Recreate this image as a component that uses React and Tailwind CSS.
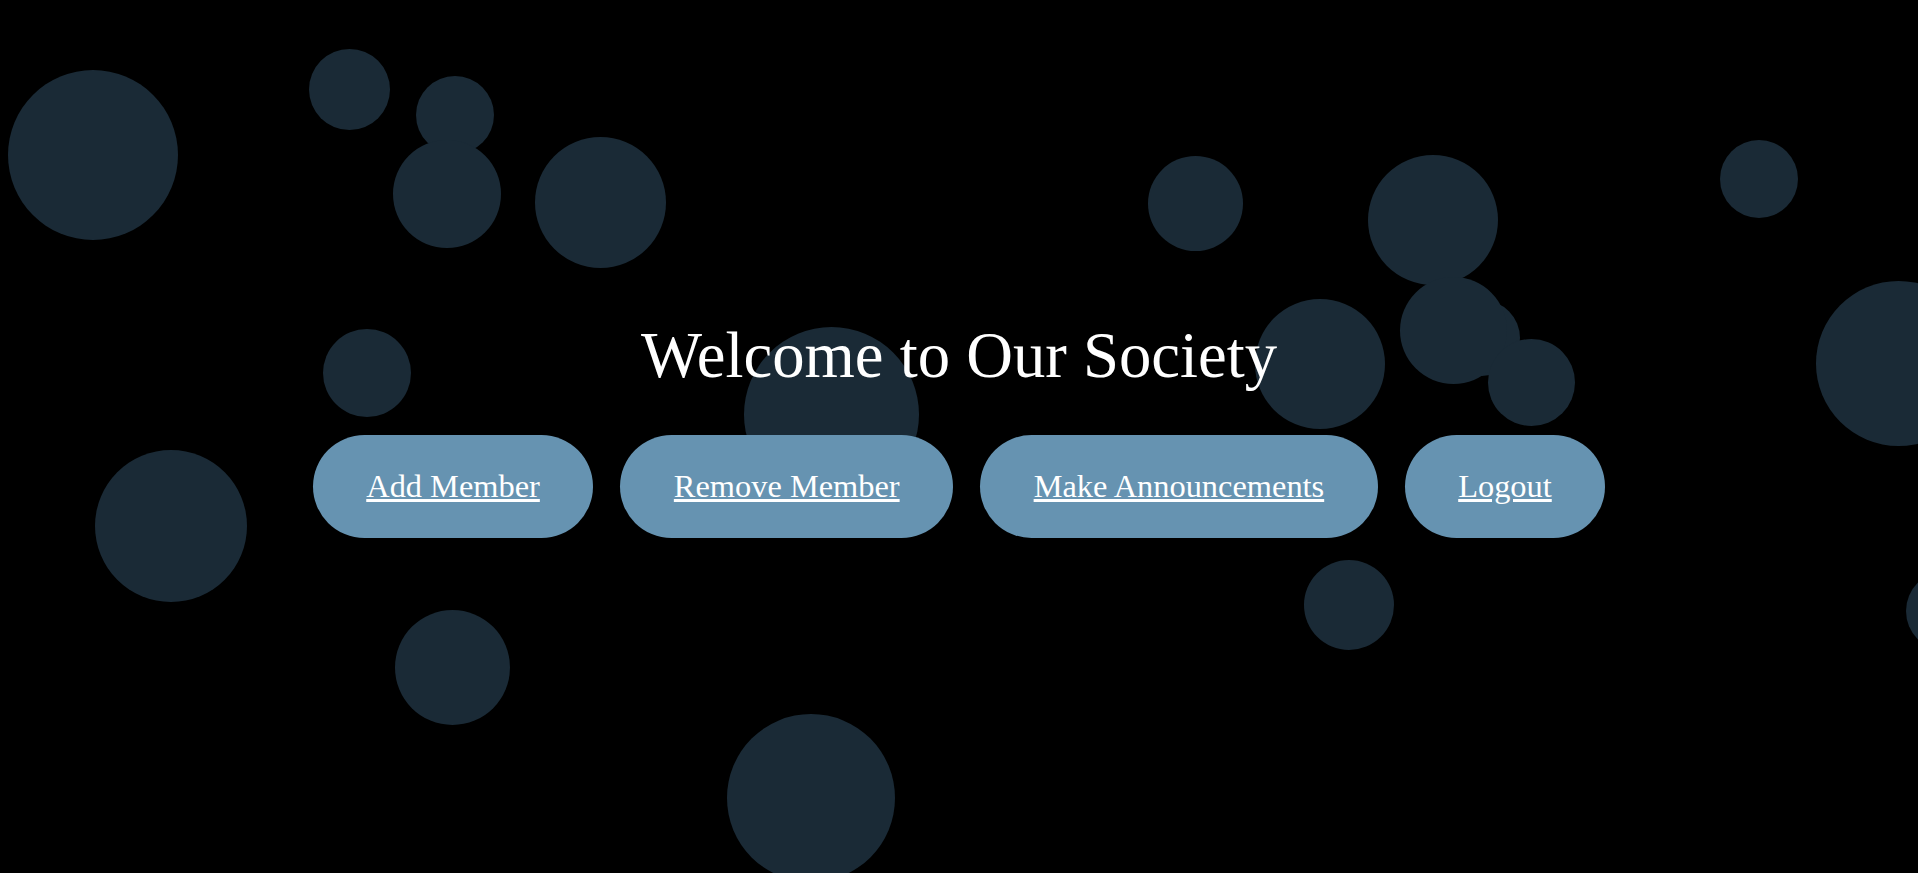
import React from "react";

const circles = [
  [93, 155, 170],
  [349.5, 89.5, 81],
  [455, 115, 78],
  [447, 194, 108],
  [600.5, 202.5, 131],
  [366.5, 373, 88],
  [831.5, 414.5, 175],
  [1195, 203.5, 95],
  [1433, 220, 130],
  [1319.5, 364, 130],
  [1482, 338, 76],
  [1453.5, 330, 107],
  [1531.5, 382, 87],
  [1759, 179, 78],
  [1898.5, 363.5, 165],
  [171, 526, 152],
  [452.5, 667.5, 115],
  [811, 798, 168],
  [1348.5, 605, 90],
  [1946, 611, 80],
];

const buttons = ["Add Member", "Remove Member", "Make Announcements", "Logout"];

export default function App() {
  return (
    <div className="relative h-screen w-full overflow-hidden bg-black font-['Liberation_Serif','Times_New_Roman',serif] text-white">
      {circles.map(([x, y, d], i) => (
        <div
          key={i}
          className="absolute rounded-full bg-[#1a2a36]"
          style={{ left: x - d / 2, top: y - d / 2, width: d, height: d }}
        />
      ))}
      <div className="relative flex flex-col items-center pt-[318px]">
        <h1 className="h-[74px] text-[64.7px] leading-[74px] font-normal">Welcome to Our Society</h1>
        <div className="mt-[43px] flex gap-[27px]">
          {buttons.map((b) => (
            <div
              key={b}
              className="flex h-[103px] items-center rounded-[52px] bg-[#6693b1] px-[53.5px]"
            >
              <a href="#" className="text-[32.4px] leading-[37px] text-white underline">
                {b}
              </a>
            </div>
          ))}
        </div>
      </div>
    </div>
  );
}
